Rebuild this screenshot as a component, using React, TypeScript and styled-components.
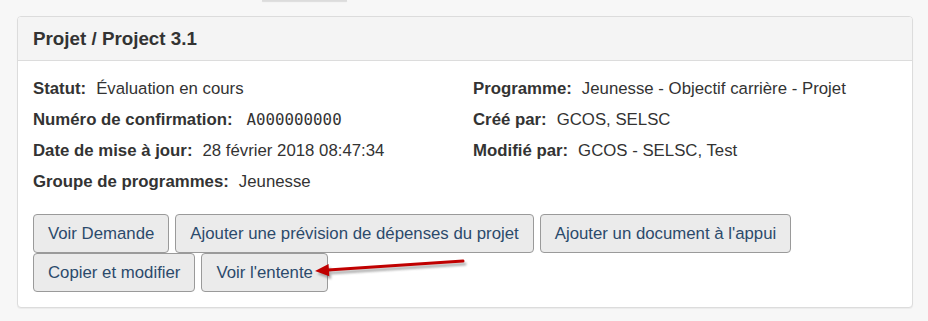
import React from "react";
import styled, { createGlobalStyle } from "styled-components";

const GlobalStyle = createGlobalStyle`
    html, body {
        margin: 0;
        padding: 0;
        background-color: #f7f7f7;
        font-family: "Liberation Sans", Arial, sans-serif;
        color: #333;
    }
`

const leftFields = [
    { label: "Statut:", value: "Évaluation en cours" },
    { label: "Numéro de confirmation:", value: "A000000000", mono: true },
    { label: "Date de mise à jour:", value: "28 février 2018 08:47:34" },
    { label: "Groupe de programmes:", value: "Jeunesse" },
]

const rightFields = [
    { label: "Programme:", value: "Jeunesse - Objectif carrière - Projet" },
    { label: "Créé par:", value: "GCOS, SELSC" },
    { label: "Modifié par:", value: "GCOS - SELSC, Test" },
]

const actions = [
    "Voir Demande",
    "Ajouter une prévision de dépenses du projet",
    "Ajouter un document à l'appui",
    "Copier et modifier",
    "Voir l'entente",
]

type Field = { label: string; value: string; mono?: boolean }

const FieldList = ({ fields }: { fields: Field[] }) => (
    <Column>
        {fields.map((f) => (
            <FieldRow key={f.label}>
                <Label>{f.label}</Label>
                <Value $mono={f.mono}>{f.value}</Value>
            </FieldRow>
        ))}
    </Column>
)

// red annotation arrow pointing at "Voir l'entente"
const Arrow = () => (
    <ArrowSvg width="195" height="30" viewBox="0 0 195 30">
        <defs>
            <filter id="arrowBlur" x="-10%" y="-50%" width="120%" height="200%">
                <feGaussianBlur stdDeviation="1.2" />
            </filter>
        </defs>
        <g transform="translate(2 3)" filter="url(#arrowBlur)" opacity="0.45">
            <line x1="185" y1="7" x2="50" y2="16.1" stroke="#555" strokeWidth="3" strokeLinecap="round" />
            <polygon points="37,17 51.3,22.2 50.6,10" fill="#555" />
        </g>
        <line x1="185" y1="7" x2="50" y2="16.1" stroke="#c00000" strokeWidth="3" strokeLinecap="round" />
        <polygon points="37,17 51.3,22.2 50.6,10" fill="#c00000" />
    </ArrowSvg>
)

export default function App() {
    return (
        <Page>
            <GlobalStyle />
            <TopStrip>
                <TabEdge />
            </TopStrip>
            <Panel>
                <PanelHeader>
                    <PanelTitle>Projet / Project 3.1</PanelTitle>
                </PanelHeader>
                <PanelBody>
                    <Details>
                        <FieldList fields={leftFields} />
                        <FieldList fields={rightFields} />
                    </Details>
                    <ButtonArea>
                        {actions.map((a) => (
                            <ActionButton key={a}>{a}</ActionButton>
                        ))}
                        <Arrow />
                    </ButtonArea>
                </PanelBody>
            </Panel>
        </Page>
    )
}

const Page = styled.div`
    width: 928px;
    height: 321px;
    overflow: hidden;
    background-color: #f7f7f7;
`

const TopStrip = styled.div`
    height: 16px;
    padding-left: 262px;
`

const TabEdge = styled.div`
    width: 85px;
    height: 1px;
    background-color: #dcdcdc;
    box-shadow: 0 1px 1px rgba(0, 0, 0, 0.12);
`

const Panel = styled.section`
    margin-left: 17px;
    width: 894px;
    background-color: #fff;
    border: 1px solid #dcdcdc;
    border-radius: 4px;
    box-shadow: 0 1px 1px rgba(0, 0, 0, 0.05);
`

const PanelHeader = styled.div`
    height: 43px;
    display: flex;
    align-items: center;
    padding: 0 15px;
    background-color: #f4f4f4;
    border-bottom: 1px solid #dcdcdc;
    border-radius: 3px 3px 0 0;
`

const PanelTitle = styled.h3`
    margin: 0;
    font-size: 18.8px;
    font-weight: 700;
    color: #333;
`

const PanelBody = styled.div`
    padding: 12px 15px 15px;
`

const Details = styled.div`
    display: grid;
    grid-template-columns: 440px 1fr;
`

const Column = styled.div`
    display: flex;
    flex-direction: column;
`

const FieldRow = styled.div`
    height: 31px;
    display: flex;
    align-items: center;
    font-size: 16.8px;
    white-space: nowrap;
`

const Label = styled.span`
    font-weight: 700;
    margin-right: 10px;
`

const Value = styled.span<{ $mono?: boolean }>`
    font-family: ${(p) => (p.$mono ? '"DejaVu Sans Mono", "Liberation Mono", monospace' : 'inherit')};
    font-size: ${(p) => (p.$mono ? "15.8px" : "inherit")};
    margin-left: ${(p) => (p.$mono ? "4px" : "0")};
`

const ButtonArea = styled.div`
    position: relative;
    margin-top: 17px;
    display: flex;
    flex-wrap: wrap;
    column-gap: 6px;
    row-gap: 0;
`

const ActionButton = styled.button`
    height: 39px;
    padding: 0 14px;
    font-family: "Liberation Sans", Arial, sans-serif;
    font-size: 16.8px;
    color: #2b4a6b;
    background-color: #ebebeb;
    border: 1px solid #9a9a9a;
    border-radius: 4px;
    cursor: pointer;
`

const ArrowSvg = styled.svg`
    position: absolute;
    left: 245px;
    top: 40px;
    overflow: visible;
    pointer-events: none;
`
